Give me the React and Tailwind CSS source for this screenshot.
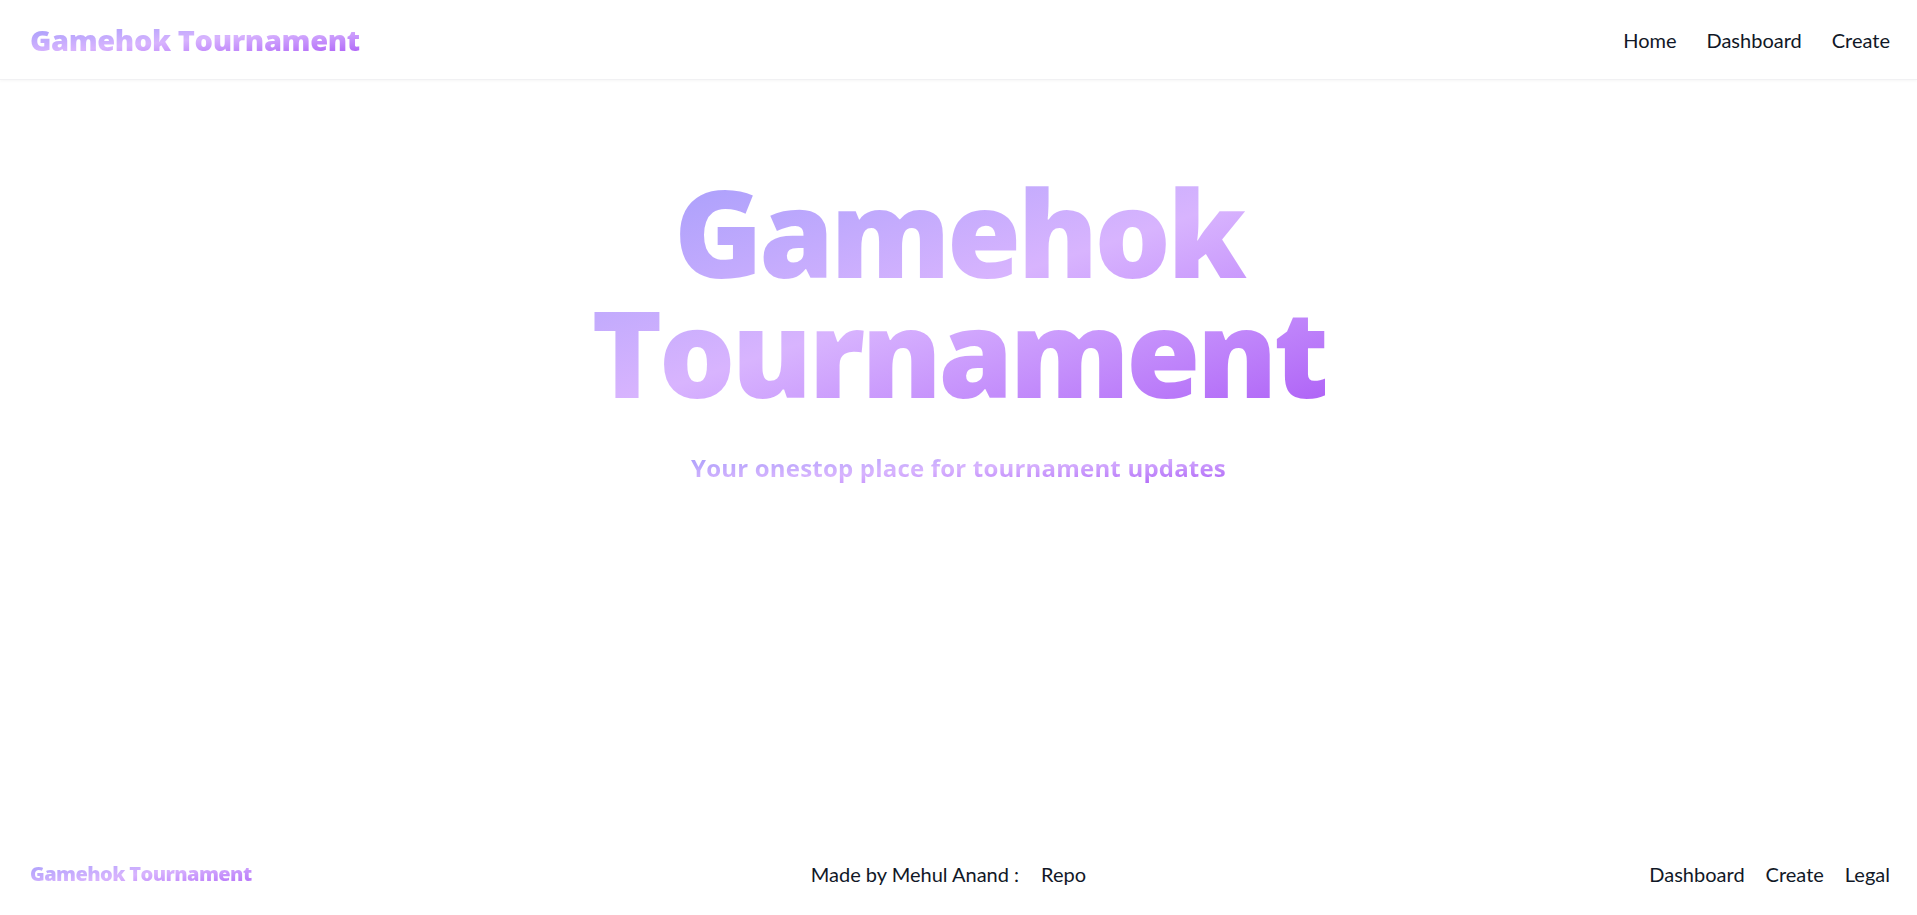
export default function App() {
  const grad = "bg-gradient-to-br from-[#a39cfb] via-[#d8b4fe] to-[#ae5ff6] bg-clip-text text-transparent";
  return (
    <div className="min-h-screen flex flex-col bg-white font-['Lato',sans-serif] text-[#111827]">
      <header className="h-[80px] flex items-center justify-between pl-[30px] pr-[27px] border-b border-[#f1f1f3] shadow-[0_1px_3px_rgba(0,0,0,0.04)]">
        <span className={`text-[29px] font-extrabold font-['Open_Sans',sans-serif] leading-none tracking-[-0.4px] ${grad}`}>
          Gamehok Tournament
        </span>
        <nav className="flex items-center gap-[30px] text-[20px]">
          <a>Home</a>
          <a>Dashboard</a>
          <a>Create</a>
        </nav>
      </header>

      <main className="flex-1 flex flex-col items-center">
        <h1 className={`mt-[92px] text-center font-['Open_Sans',sans-serif] font-extrabold text-[120px] leading-[120px] tracking-[-3.5px] ${grad}`}>
          Gamehok
          <br />
          Tournament
        </h1>
        <p className={`mt-[40px] font-['Open_Sans',sans-serif] font-bold text-[24px] leading-8 tracking-[0.2px] ${grad}`}>
          Your onestop place for tournament updates
        </p>
      </main>

      <footer className="h-[80px] flex items-center justify-between pl-[30px] pr-[27px] pb-[3px] text-[20px]">
        <span className={`text-[20px] font-extrabold font-['Open_Sans',sans-serif] tracking-[-0.6px] ${grad}`}>Gamehok Tournament</span>
        <div className="flex items-center gap-[22px] mr-[4px]">
          <span>Made by Mehul Anand :</span>
          <a>Repo</a>
        </div>
        <nav className="flex items-center gap-[21px]">
          <a>Dashboard</a>
          <a>Create</a>
          <a>Legal</a>
        </nav>
      </footer>
    </div>
  );
}
